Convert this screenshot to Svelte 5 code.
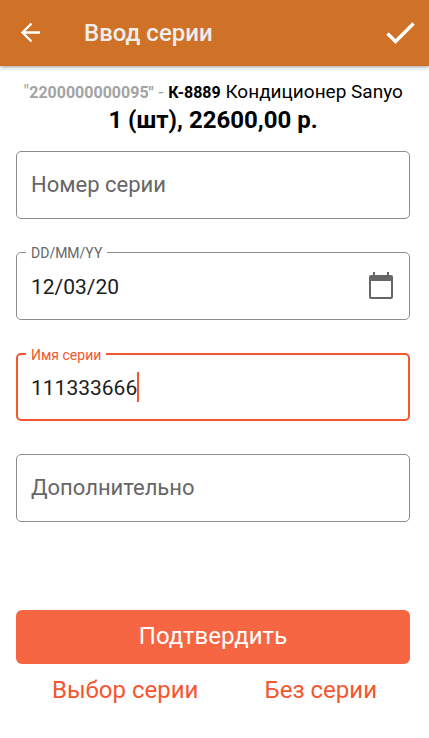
<script>
  let number = $state('');
  let date = $state('12/03/20');
  let name = $state('111333666');
  let extra = $state('');
</script>

<div class="screen">
  <header class="toolbar">
    <button class="icon-btn" type="button" aria-label="Назад">
      <svg width="30" height="30" viewBox="0 0 30 30" fill="none" stroke="#fff" stroke-width="2.3">
        <path d="M24 14.5H6.5M15.5 5.5l-9 9 9 9" />
      </svg>
    </button>
    <h1>Ввод серии</h1>
    <button class="icon-btn" type="button" aria-label="Готово">
      <svg width="36" height="36" viewBox="0 0 36 36" fill="none" stroke="#fff" stroke-width="3.4">
        <path d="M5.5 18.5l8 8L31.500 8.500" />
      </svg>
    </button>
  </header>

  <main>
    <div class="product">
      <p class="item">
        <span class="barcode">"<b>2200000000095"</b> -</span> <b class="code">К-8889</b> Кондиционер Sanyo
      </p>
      <p class="price">1 (шт), 22600,00 р.</p>
    </div>

    <form onsubmit={(e) => e.preventDefault()}>
      <div class="field">
        <input type="text" placeholder="Номер серии" aria-label="Номер серии" bind:value={number} />
      </div>

      <div class="field">
        <label for="date">DD/MM/YY</label>
        <input id="date" type="text" bind:value={date} />
        <button class="calendar" type="button" aria-label="Календарь">
          <svg width="26" height="28" viewBox="0 0 26 28">
            <path
              fill="#666"
              fill-rule="evenodd"
              d="M5 0h2v3h12V0h2v3h2q2 0 2 2v20q0 2-2 2H3q-2 0-2-2V5q0-2 2-2h2zM3 9v16h20V9z"
            />
          </svg>
        </button>
      </div>

      <div class="field active">
        <label for="name">Имя серии</label>
        <input id="name" type="text" bind:value={name} />
        <span class="caret"></span>
      </div>

      <div class="field">
        <input type="text" placeholder="Дополнительно" aria-label="Дополнительно" bind:value={extra} />
      </div>

      <button class="confirm" type="submit">Подтвердить</button>
    </form>
    <div class="links">
      <button type="button">Выбор серии</button>
      <button type="button">Без серии</button>
    </div>
  </main>
</div>

<style>
  :global(body) {
    margin: 0;
    background: #fff;
  }
  .screen {
    font-family: Roboto, sans-serif;
    color: #000;
  }
  button,
  input {
    font-family: inherit;
    border: none;
    background: none;
    padding: 0;
    margin: 0;
  }
  button {
    cursor: pointer;
  }
  .toolbar {
    display: flex;
    align-items: center;
    height: 66px;
    padding: 0 11px 0 16px;
    box-sizing: border-box;
    background: #cf7127;
    box-shadow: 0 1px 4px rgba(0, 0, 0, 0.4);
  }
  h1 {
    flex: 1;
    margin: 0 0 0 38px;
    font-size: 24px;
    font-weight: 500;
    line-height: 32px;
    color: #eee;
  }
  .icon-btn {
    display: flex;
  }
  main {
    padding: 14px 19px 24px 16px;
  }
  .product {
    text-align: center;
  }
  .product p {
    margin: 0;
  }
  .item {
    font-size: 19px;
    line-height: 24px;
    white-space: nowrap;
  }
  .item b {
    font-size: 16px;
    font-weight: 700;
  }
  .barcode {
    color: #a3a3a3;
  }
  .price {
    font-size: 24px;
    font-weight: 700;
    line-height: 30px;
  }
  form {
    display: flex;
    flex-direction: column;
    gap: 33px;
    margin-top: 16px;
  }
  .field {
    position: relative;
    display: flex;
    align-items: center;
    height: 68px;
    padding: 0 15px 0 14px;
    box-sizing: border-box;
    border: 1px solid #8c8c8c;
    border-radius: 5px;
  }
  .field input {
    flex: 1;
    min-width: 0;
    height: 48px;
    padding-top: 2px;
    box-sizing: border-box;
    font-size: 21px;
    color: #1c1c1c;
    outline: none;
  }
  .field input:placeholder-shown {
    padding: 0 0 2px;
    font-size: 22px;
  }
  .field input::placeholder {
    color: #666;
    opacity: 1;
  }
  .field label {
    position: absolute;
    top: -8px;
    left: 9px;
    padding: 0 5px;
    font-size: 14px;
    line-height: 16px;
    color: #666;
    background: #fff;
  }
  .field.active {
    padding: 0 13px;
    border: 2px solid #f4562f;
  }
  .field.active label {
    left: 8px;
    color: #f4562f;
  }
  .active input {
    flex: none;
    field-sizing: content;
    caret-color: transparent;
  }
  .caret {
    width: 2px;
    height: 30px;
    background: #f4562f;
  }
  .calendar {
    display: flex;
  }
  .confirm {
    height: 54px;
    margin-top: 55px;
    padding-bottom: 2px;
    border-radius: 6px;
    background: #f66642;
    color: #fff;
    font-size: 24px;
  }
  .links {
    display: flex;
    justify-content: space-between;
    margin-top: 10px;
    padding: 0 33px 0 36px;
  }
  .links button {
    font-size: 24px;
    line-height: 32px;
    color: #f4562f;
  }
</style>
